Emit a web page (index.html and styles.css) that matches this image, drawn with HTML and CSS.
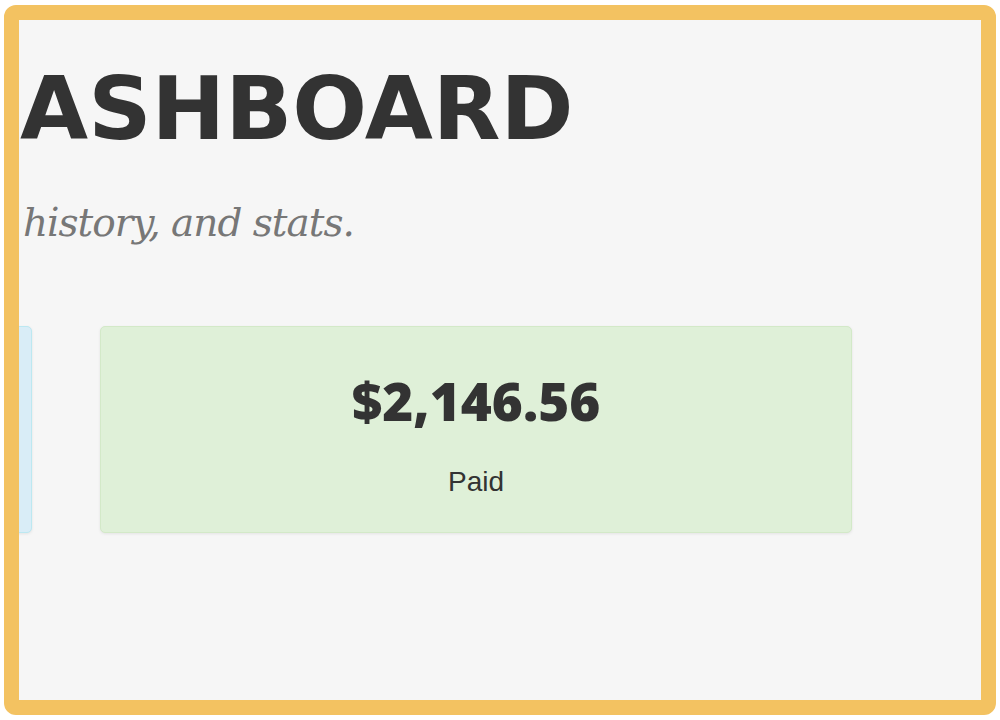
FILE: index.html
```html
<!DOCTYPE html>
<html>
<head>
<meta charset="utf-8"/>
<title>Dashboard</title>
<link rel="stylesheet" href="styles.css">
</head>
<body>
<div class="frame">
  <div class="masthead">
    <h1 class="title">DASHBOARD</h1>
    <p class="lead">history, and stats.</p>
  </div>

  <div class="stats">
    <div class="stat stat-info"></div>
    <div class="stat stat-success">
      <div class="stat-value">$2,146.56</div>
      <div class="stat-label">Paid</div>
    </div>
  </div>
</div>
</body>
</html>
```

FILE: styles.css
```css
html, body {
   margin: 0;
   background-color: white;
}

body {
   font-family: 'Liberation Sans', Arial, sans-serif;
   color: #333;
}

.frame {
   box-sizing: border-box;
   height: 710px;
   margin: 5px 4px;
   border: 15px solid #f3c261;
   border-radius: 12px;
   background-color: #f6f6f6;
   overflow: hidden;
}

.masthead {
   padding-top: 45px;
}

.title {
   margin: 0 0 0 -72px;
   font-family: 'DejaVu Sans', sans-serif;
   font-weight: bold;
   font-size: 88px;
   line-height: 87px;
   color: #333;
   white-space: nowrap;
}

.lead {
   margin: 47px 0 0 4px;
   font-family: 'DejaVu Serif', serif;
   font-style: italic;
   font-size: 39px;
   line-height: 48px;
   letter-spacing: -1px;
   color: #777;
   white-space: nowrap;
}

.stats {
   display: flex;
   gap: 68px;
   margin: 79px 0 0 -739px;
}

.stat {
   box-sizing: border-box;
   flex: 0 0 752px;
   height: 207px;
   border: 1px solid;
   border-radius: 5px;
   box-shadow: 0 1px 3px rgba(0, 0, 0, 0.08);
   text-align: center;
}

.stat-info {
   background-color: #d9edf7;
   border-color: #bce8f1;
}

.stat-success {
   background-color: #dff0d8;
   border-color: #d3e9c8;
}

.stat-value {
   margin-top: 43px;
   font-family: 'Open Sans', sans-serif;
   font-weight: 800;
   font-size: 53px;
   line-height: 62px;
   color: #333;
}

.stat-label {
   margin-top: 33px;
   font-size: 28px;
   line-height: 34px;
   color: #333;
}
```
